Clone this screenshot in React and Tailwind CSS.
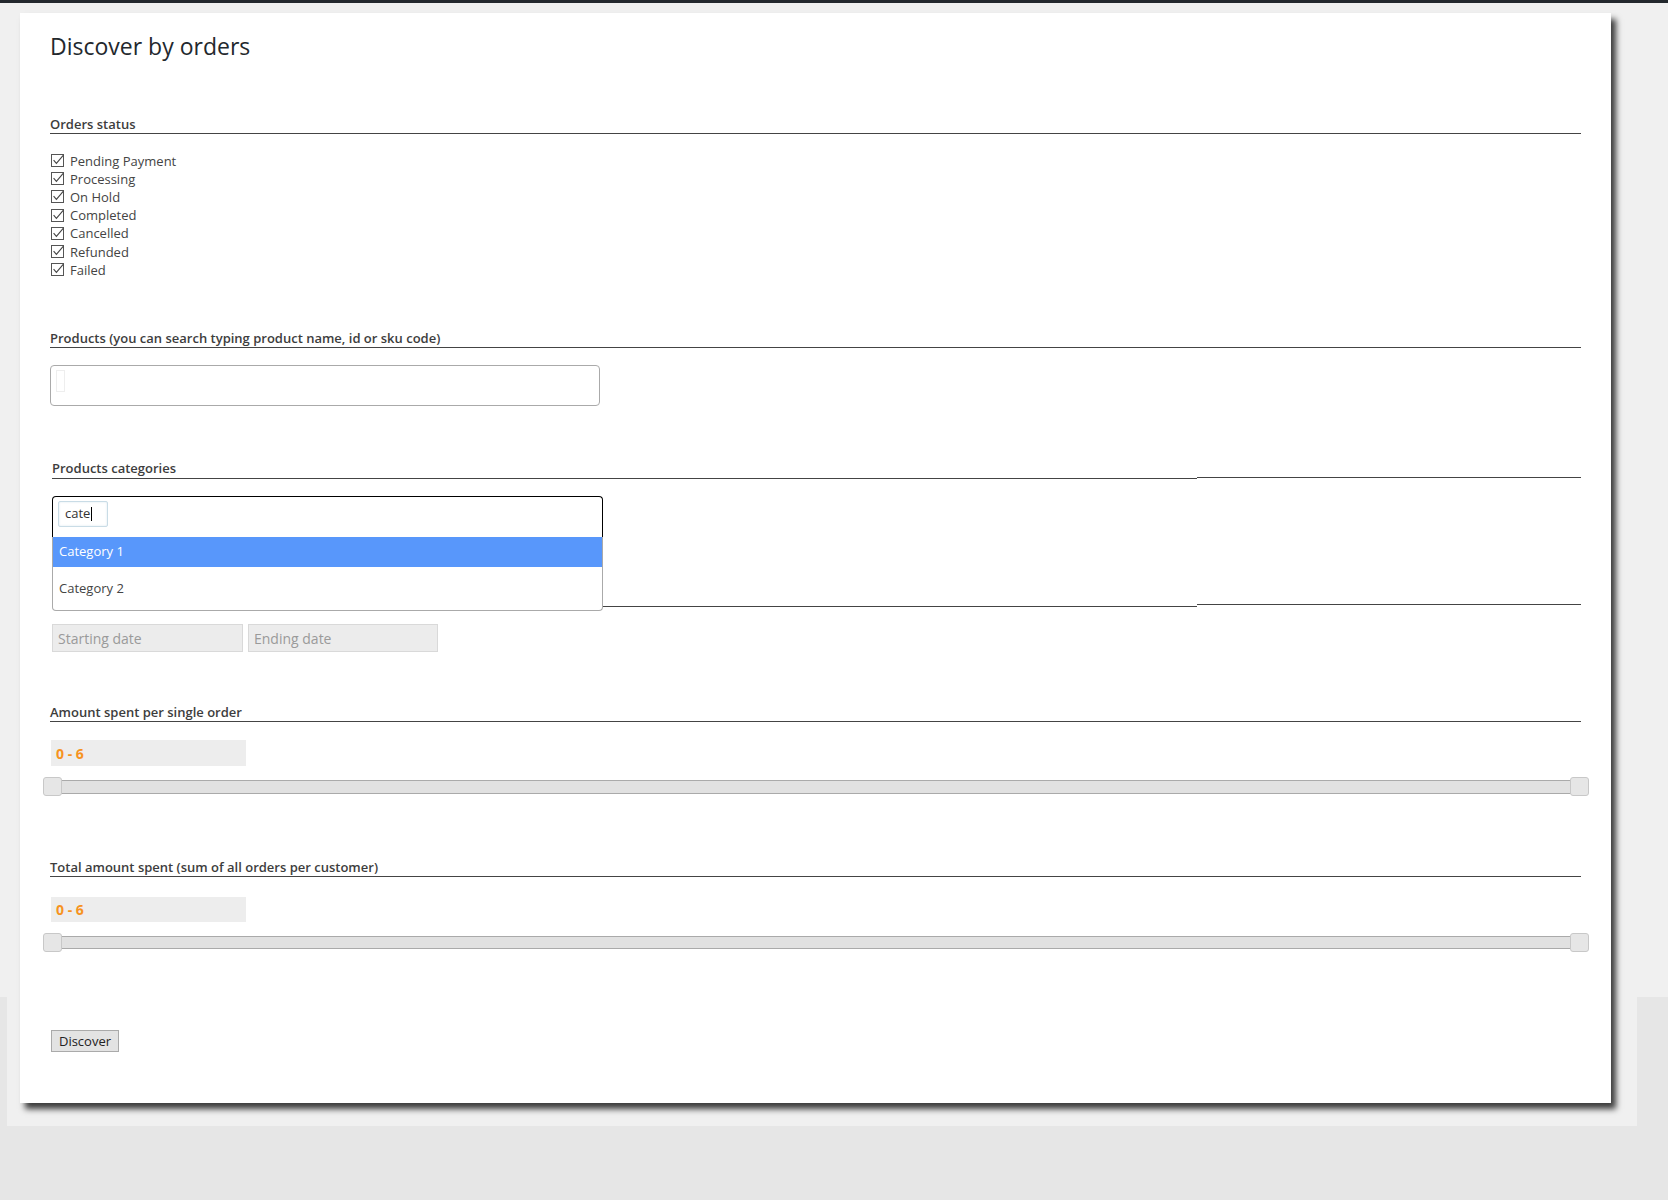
import React from 'react';

const statuses = ['Pending Payment', 'Processing', 'On Hold', 'Completed', 'Cancelled', 'Refunded', 'Failed'];

function Heading({ children, className = '' }) {
  return (
    <h3 className={`border-b border-[#444] text-[13px] font-semibold leading-[18px] text-[#3d3d3d] ${className}`}>
      {children}
    </h3>
  );
}

function CheckBox() {
  return (
    <svg width="13" height="13" viewBox="0 0 13 13" className="shrink-0">
      <rect x="0.5" y="0.5" width="12" height="12" fill="#fff" stroke="#555" />
      <polyline points="2.6,6.2 5.4,9.4 12.2,1.4" fill="none" stroke="#444" strokeWidth="1.1" />
    </svg>
  );
}

function RangeSlider({ thin }) {
  return (
    <div
      className={`relative -ml-[7px] -mr-[8px] rounded-[3px] border border-[#aaa] bg-[#e1e1e1] ${
        thin ? 'h-[13px]' : 'h-[14px]'
      }`}
    >
      <span className="absolute -left-px -top-[4px] h-[19px] w-[19px] rounded-[3px] border border-[#c8c8c8] bg-[#e6e6e6]" />
      <span className="absolute -right-px -top-[4px] h-[19px] w-[19px] rounded-[3px] border border-[#c8c8c8] bg-[#e6e6e6]" />
    </div>
  );
}

function ValueBox({ className = '' }) {
  return (
    <div className={`ml-px flex w-[195px] items-center bg-[#ededed] pl-[5px] text-[14px] font-bold text-[#f6931f] ${className}`}>
      0 - 6
    </div>
  );
}

export default function App() {
  return (
    <div className="min-h-[1200px] w-full bg-[#e6e6e6] font-['Open_Sans',sans-serif]">
      <div className="h-[3px] bg-[#23282d]" />
      <div className="bg-[linear-gradient(#f0f0f0,#f0f0f0),linear-gradient(#f0f0f0,#f0f0f0)] bg-[length:100%_994px,1630px_1123px] bg-[position:0_0,7px_0] bg-no-repeat pl-[20px] pt-[10px] pb-[97px]">
        <div className="relative z-10 w-[1591px] bg-white px-[30px] pt-[19px] pb-[51px] shadow-[5px_6px_6px_rgba(0,0,0,0.75)]">
          <h1 className="text-[23px] font-normal leading-[29px] text-[#23282d]">Discover by orders</h1>

          {/* Orders status */}
          <Heading className="mt-[54px]">Orders status</Heading>
          <ul className="mt-[17.5px]">
            {statuses.map((s) => (
              <li key={s} className="ml-px flex h-[18.2px] items-center gap-[6px] text-[13px] leading-[18px] text-[#444]">
                <CheckBox />
                <span>{s}</span>
              </li>
            ))}
          </ul>

          {/* Products */}
          <Heading className="mt-[50px]">Products (you can search typing product name, id or sku code)</Heading>
          <div className="mt-[17px] h-[41px] w-[550px] rounded-[4px] border border-[#aaa] bg-white pl-[5px] pt-[4px]">
            <div className="h-[22px] w-[9px] border border-[#eeeeee]" />
          </div>

          {/* Products categories */}
          <div className="mt-[53px] pl-[2px]">
            <h3 className="text-[13px] font-semibold leading-[18px] text-[#3d3d3d]">Products categories</h3>
            <div className="flex h-[2px] items-start">
              <div className="mt-px h-px w-[1145px] bg-[#444]" />
              <div className="h-px flex-1 bg-[#444]" />
            </div>

            <div className="relative mt-[17.5px] w-[551px]">
              <div className="h-[40.5px] rounded-t-[4px] border border-b-0 border-black bg-white pl-[5px] pt-[4px]">
                <div className="flex h-[25.5px] w-[50px] items-center rounded-[2px] border border-[#c9dce6] pl-[6px] text-[13px] text-[#333] shadow-[inset_0_0_2px_rgba(120,170,200,0.3)]">
                  cate
                  <span className="ml-px h-[14px] w-px bg-black" />
                </div>
              </div>
              <ul className="absolute left-0 top-full z-20 w-full rounded-b-[4px] border border-t-0 border-[#aaa] bg-white text-[13px]">
                <li className="flex h-[30px] items-center bg-[#5897fb] pl-[6px] text-white">Category 1</li>
                <li className="flex h-[43px] items-center pl-[6px] text-[#444]">Category 2</li>
              </ul>
            </div>

            {/* Orders date (covered by open dropdown) */}
            <div className="mt-[49px] h-[18px]" />
            <div className="flex h-[3px] items-start">
              <div className="mt-[2px] h-px w-[1145px] bg-[#444]" />
              <div className="h-px flex-1 bg-[#444]" />
            </div>
            <div className="mt-[17.5px] flex gap-[5px]">
              <input
                readOnly
                placeholder="Starting date"
                className="h-[28px] w-[191px] border border-[#d9d9d9] bg-[#ececec] px-[5px] text-[14px] text-[#444] placeholder:text-[#9a9a9a]"
              />
              <input
                readOnly
                placeholder="Ending date"
                className="h-[28px] w-[190px] border border-[#d9d9d9] bg-[#ececec] px-[5px] text-[14px] text-[#444] placeholder:text-[#9a9a9a]"
              />
            </div>
          </div>

          {/* Amount per order */}
          <Heading className="mt-[51px]">Amount spent per single order</Heading>
          <ValueBox className="mt-[18px] h-[26px]" />
          <div className="mt-[14px]">
            <RangeSlider />
          </div>

          {/* Total amount */}
          <Heading className="mt-[63.5px]">Total amount spent (sum of all orders per customer)</Heading>
          <ValueBox className="mt-[20px] h-[25.5px]" />
          <div className="mt-[14px]">
            <RangeSlider thin />
          </div>

          <button className="ml-px mt-[81px] h-[22px] w-[68px] border border-[#aaa] bg-[#e3e3e3] text-[13px] leading-[20px] text-[#222]">
            Discover
          </button>
        </div>
      </div>
    </div>
  );
}
